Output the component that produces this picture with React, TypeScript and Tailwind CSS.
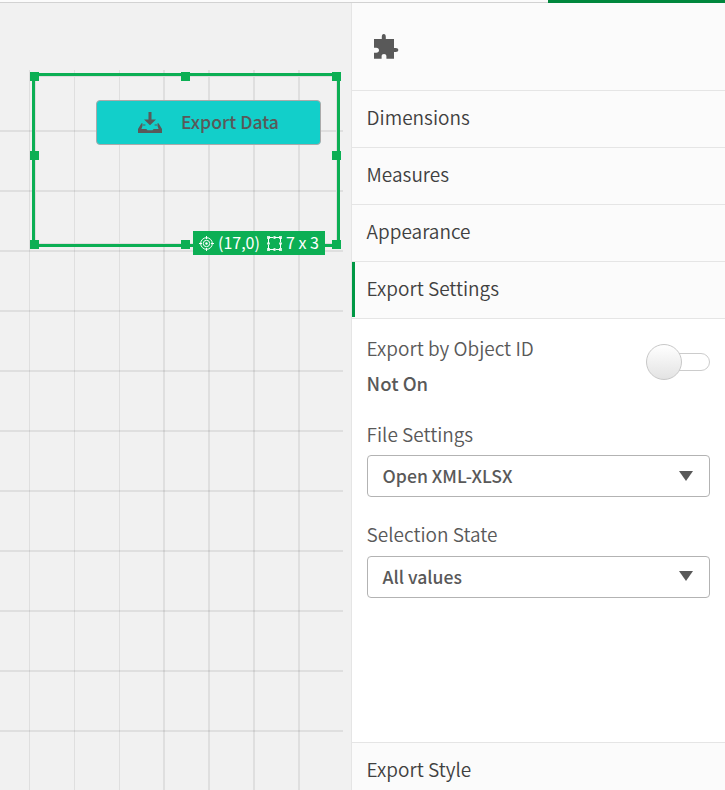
import React from "react";

const FONT = "font-['Noto_Sans_CJK_SC','Open_Sans',sans-serif]";

const columns = ["left-[29px] w-px", "left-[74px] w-px", "left-[119px] w-px", "left-[163px] w-[2px]", "left-[208px] w-[2px]", "left-[253px] w-[2px]", "left-[298px] w-[2px]"];
const handles = [
  "left-[30px] top-[72px]", "left-[181px] top-[72px]", "left-[332px] top-[72px]",
  "left-[30px] top-[151px]", "left-[332px] top-[151px]",
  "left-[30px] top-[240px]", "left-[181px] top-[240px]", "left-[332px] top-[240px]",
];

function Puzzle() {
  return (
    <svg width="25" height="25" viewBox="0 0 25 25" fill="#595959" className="block">
      <path d="M0 5H7.8V3C7.8 1.2 8.5 0 9.8 0S11.8 1.2 11.8 3V5H20V14H21.8C23.4 14 24.3 14.7 24.3 16S23.4 18 21.8 18H20V24.7H12.4V22.3C12.4 20.9 11.4 20 10 20S7.6 20.9 7.6 22.3V24.7H0V18.7H2.2C4 18.7 5 17.7 5 16.2S4 13.7 2.2 13.7H0Z" />
    </svg>
  );
}

function Download() {
  return (
    <svg width="24" height="22" viewBox="0 0 24 22" fill="#595959" className="block">
      <path d="M10.5 0H13.5V7.5H18L12 13.3L6 7.5H10.5Z" />
      <path d="M3.5 11.2H4.5V14L3.4 17H8.3L9.5 18.2H14.5L15.7 17H20.6L19.5 14V11.2H20.5L24 17V21H0V17Z" />
      <path d="M5 12.4H7.4V13.6H5ZM16.6 12.4H19V13.6H16.6Z" />
    </svg>
  );
}

function Target() {
  return (
    <svg width="16" height="16" viewBox="0 0 16 16" fill="none" stroke="white" className="block">
      <circle cx="7.5" cy="8.5" r="5.8" />
      <circle cx="7.5" cy="8.5" r="3.2" />
      <circle cx="7.5" cy="8.5" r="1.2" fill="white" stroke="none" />
      <path d="M7.5 1V4M7.5 13V16M0 8.5H3M12 8.5H15" />
    </svg>
  );
}

function Bounds() {
  return (
    <svg width="16" height="16" viewBox="0 0 16 16" fill="white" className="block">
      <path d="M1.5 2.5H13.5V14.5H1.5Z" fill="none" stroke="white" strokeDasharray="5 1" />
      <path d="M0 1h3v3h-3zM6.5 1h2v3h-2zM12 1h3v3h-3zM0 13h3v3h-3zM6.5 13h2v3h-2zM12 13h3v3h-3zM0 7.5h3v2h-3zM12 7.5h3v2h-3z" fillOpacity="0.8" />
    </svg>
  );
}

function SheetCanvas() {
  return (
    <section className="relative h-full w-[351px] shrink-0 overflow-hidden bg-[#f1f1f1]">
      {columns.map((c) => (
        <i key={c} className={`absolute top-[67px] bottom-0 bg-black/[.075] ${c}`} />
      ))}
      <div className="absolute top-[127px] left-0 flex w-[343px] flex-col gap-[58px]">
        {Array.from({ length: 11 }, (_, i) => (
          <i key={i} className="h-[2px] bg-black/[.075]" />
        ))}
      </div>
      <div className="absolute -top-[3px] left-0">
        <div className="absolute top-[73px] left-[32px] h-[174px] w-[308px] border-[3px] border-[#0caf54]">
          <div className="h-full border border-[#dedede]" />
        </div>
        {handles.map((h) => (
          <i key={h} className={`absolute size-[9px] bg-[#0caf54] ${h}`} />
        ))}
        <button className="absolute top-[100px] left-[96px] flex h-[45px] w-[225px] items-center rounded-[4px] border border-[#aaa] bg-[#12cfca] pl-[41px]">
          <Download />
          <span className="-mt-px ml-[19px] text-[17.6px] leading-[24px] font-medium whitespace-nowrap text-[#595959]">Export Data</span>
        </button>
        <div className="absolute top-[231px] left-[193px] flex h-[24px] w-[132px] items-center bg-[#0caf54] pl-[6px] text-[16px] leading-[24px] whitespace-nowrap text-white">
          <Target />
          <span className="-mt-[2px] ml-[3px] w-[42px]">(17,0)</span>
          <span className="ml-[7px]"><Bounds /></span>
          <span className="-mt-[2px] ml-[3px]">7 x 3</span>
        </div>
      </div>
    </section>
  );
}

function Section({ label, active = false }: { label: string; active?: boolean }) {
  return (
    <div className="relative flex h-[57px] shrink-0 items-center border-b border-[#e5e5e5] bg-[#fbfbfb] pb-[4px] pl-[14.6px] text-[19px] leading-[28px] text-[#404040]">
      {active && <i className="absolute top-0 left-0 h-[55px] w-[3px] bg-[#009845]" />}
      <span className="font-[350]">{label}</span>
    </div>
  );
}

function Select({ value, arrow }: { value: string; arrow: string }) {
  return (
    <div className="flex h-[42px] items-center justify-between rounded-[4px] border border-[#b3b3b3] bg-white pr-[16px] pl-[14.6px]">
      <span className="text-[17.6px] leading-[26px] font-medium text-[#595959]">{value}</span>
      <svg width="14" height="10" viewBox="0 0 14 10" className={`block ${arrow}`}><path d="M0 0H14L7 10Z" fill="#595959" /></svg>
    </div>
  );
}

export default function App() {
  return (
    <div className={`flex h-[790px] w-[725px] flex-col overflow-hidden bg-[#fbfbfb] ${FONT}`}>
      <div className="flex h-[3px] shrink-0">
        <div className="w-[548px] border-b border-[#d2d2d2]" />
        <div className="flex-1 bg-[#00873d]" />
      </div>
      <div className="flex h-[787px]">
        <SheetCanvas />
        <aside className="flex min-w-0 flex-1 flex-col border-l border-[#e5e5e5] bg-white">
          <header className="h-[88px] shrink-0 border-b border-[#e5e5e5] bg-[#fbfbfb] pt-[31px] pl-[22px]"><Puzzle /></header>
          <Section label="Dimensions" />
          <Section label="Measures" />
          <Section label="Appearance" />
          <Section label="Export Settings" active />
          <div className="h-[423px] shrink-0 px-[15px] pt-[15px] text-[19px] leading-[28px] text-[#595959]">
            <div className="flex h-[65px] justify-between">
              <div>
                <div className="-ml-[0.4px] font-[350]">Export by Object ID</div>
                <div className="mt-[7px] -ml-[0.4px] text-[18.5px] font-medium">Not On</div>
              </div>
              <div className="mt-[10px] flex h-[36px] w-[64px] items-center">
                <div className="z-10 size-[36px] shrink-0 rounded-full border border-[#c8c8c8] bg-linear-to-b from-white to-[#e3e3e3]" />
                <div className="-ml-[10px] h-[18px] flex-1 rounded-r-full border border-[#ccc]" />
              </div>
            </div>
            <div className="mt-[21px] mb-[7px] -ml-[0.4px] font-[350]">File Settings</div>
            <Select value="Open XML-XLSX" arrow="" />
            <div className="mt-[23px] mb-[8px] -ml-[0.4px] font-[350]">Selection State</div>
            <Select value="All values" arrow="mb-[2px]" />
          </div>
          <div className="border-t border-[#e5e5e5]"><Section label="Export Style" /></div>
        </aside>
      </div>
    </div>
  );
}
